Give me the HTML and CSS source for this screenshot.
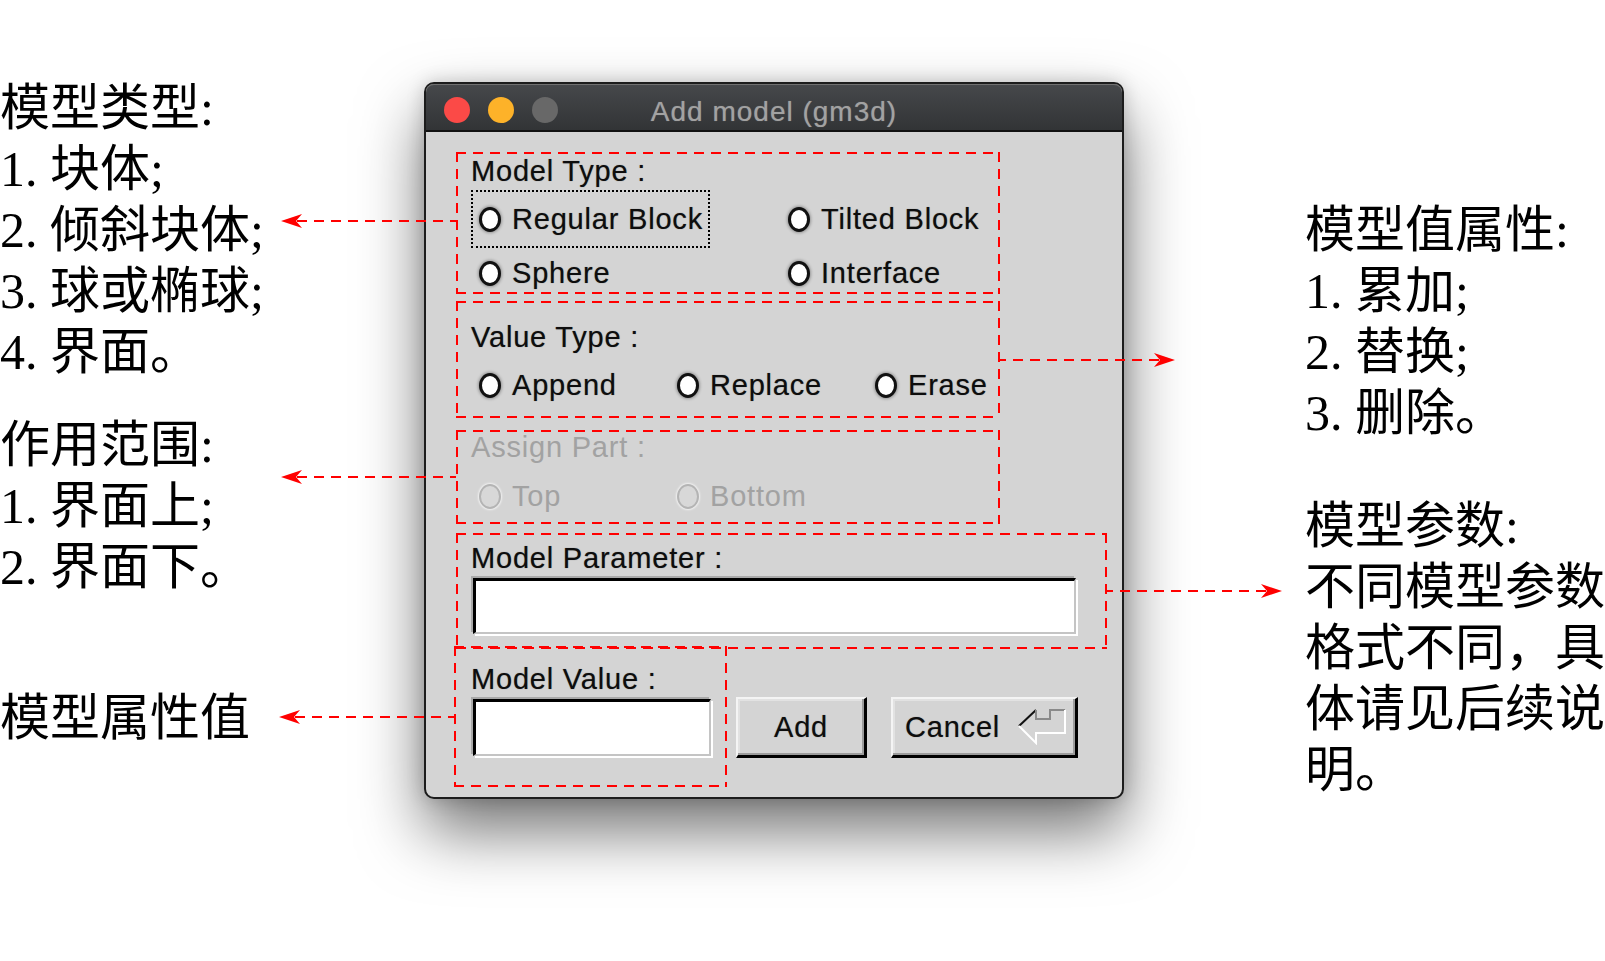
FILE: index.html
```html
<!DOCTYPE html>
<html lang="zh-CN">
<head>
    <meta charset="UTF-8">
    <meta name="viewport" content="width=device-width, initial-scale=1.0">
    <title>Add model (gm3d)</title>
    <link rel="stylesheet" href="styles.css">
</head>
<body>
<div id="page">
    <div class="notes notes-left">
        <div class="note note-type">
            <div>模型类型:</div>
            <div>1. 块体;</div>
            <div>2. 倾斜块体;</div>
            <div>3. 球或椭球;</div>
            <div>4. 界面。</div>
        </div>
        <div class="note note-part">
            <div>作用范围:</div>
            <div>1. 界面上;</div>
            <div>2. 界面下。</div>
        </div>
        <div class="note note-value">
            <div>模型属性值</div>
        </div>
    </div>

    <div id="dialog">
        <div id="titlebar">
            <div class="lights">
                <span class="light red"></span>
                <span class="light yellow"></span>
                <span class="light off"></span>
            </div>
            <div id="title">Add model (gm3d)</div>
            <div></div>
        </div>

        <div id="dialog-body">
            <div class="group box-type">
                <span class="arrow to-left"><svg width="175" height="16" viewBox="0 0 175 16"><line x1="16" y1="8" x2="175" y2="8" stroke="#f00" stroke-width="2" stroke-dasharray="10 7"/><path d="M0 8 L21 1 L15 8 L21 15 Z" fill="#f00"/></svg></span>
                <div class="label">Model Type :</div>
                <div class="options two">
                    <label class="opt focus"><span class="radio"></span>Regular Block</label>
                    <label class="opt"><span class="radio"></span>Tilted Block</label>
                    <label class="opt"><span class="radio"></span>Sphere</label>
                    <label class="opt"><span class="radio"></span>Interface</label>
                </div>
            </div>

            <div class="group box-value-type">
                <span class="arrow to-right"><svg width="175" height="16" viewBox="0 0 175 16"><line x1="16" y1="8" x2="175" y2="8" stroke="#f00" stroke-width="2" stroke-dasharray="10 7"/><path d="M0 8 L21 1 L15 8 L21 15 Z" fill="#f00"/></svg></span>
                <div class="label">Value Type :</div>
                <div class="options three">
                    <label class="opt"><span class="radio"></span>Append</label>
                    <label class="opt"><span class="radio"></span>Replace</label>
                    <label class="opt"><span class="radio"></span>Erase</label>
                </div>
            </div>

            <div class="group box-part disabled">
                <span class="arrow to-left"><svg width="175" height="16" viewBox="0 0 175 16"><line x1="16" y1="8" x2="175" y2="8" stroke="#f00" stroke-width="2" stroke-dasharray="10 7"/><path d="M0 8 L21 1 L15 8 L21 15 Z" fill="#f00"/></svg></span>
                <div class="label">Assign Part :</div>
                <div class="options three">
                    <label class="opt"><span class="radio"></span>Top</label>
                    <label class="opt"><span class="radio"></span>Bottom</label>
                </div>
            </div>

            <div class="group box-param">
                <span class="arrow to-right"><svg width="175" height="16" viewBox="0 0 175 16"><line x1="16" y1="8" x2="175" y2="8" stroke="#f00" stroke-width="2" stroke-dasharray="10 7"/><path d="M0 8 L21 1 L15 8 L21 15 Z" fill="#f00"/></svg></span>
                <div class="label">Model Parameter :</div>
                <div class="field field-param"></div>
            </div>

            <div class="bottom-row">
                <div class="group box-model-value">
                    <span class="arrow to-left"><svg width="175" height="16" viewBox="0 0 175 16"><line x1="16" y1="8" x2="175" y2="8" stroke="#f00" stroke-width="2" stroke-dasharray="10 7"/><path d="M0 8 L21 1 L15 8 L21 15 Z" fill="#f00"/></svg></span>
                    <div class="label">Model Value :</div>
                    <div class="field field-value"></div>
                </div>
                <button class="btn btn-add">Add</button>
                <button class="btn btn-cancel">
                    <span>Cancel</span>
                    <svg width="48" height="36" viewBox="0 0 48 36">
                        <polyline points="1,17 18,1" fill="none" stroke="#111" stroke-width="2"/>
                        <polyline points="18,1 18,10 32,10 32,1 47,1" fill="none" stroke="#8a8a8a" stroke-width="2"/>
                        <polyline points="47,1 47,24 18,24 18,34 1,17" fill="none" stroke="#fff" stroke-width="2"/>
                    </svg>
                </button>
            </div>
        </div>
    </div>

    <div class="notes notes-right">
        <div class="note note-attr">
            <div>模型值属性:</div>
            <div>1. 累加;</div>
            <div>2. 替换;</div>
            <div>3. 删除。</div>
        </div>
        <div class="note note-param">
            <div>模型参数:</div>
            <div>不同模型参数</div>
            <div>格式不同，具</div>
            <div>体请见后续说</div>
            <div>明。</div>
        </div>
    </div>
</div>
</body>
</html>
```

FILE: styles.css
```css
body { margin: 0; background: #fff; overflow: hidden; font-family: "Liberation Sans", Arial, sans-serif; }
#page { display: flex; align-items: flex-start; width: 1605px; height: 961px; }

/* annotations */
.notes { font-family: "Liberation Serif", "Noto Sans CJK SC", serif; font-size: 50px; line-height: 61px; color: #000; white-space: nowrap; }
.notes-left { width: 424px; flex: none; padding-top: 78px; }
.note-part { margin-top: 32px; }
.note-value { margin-top: 90px; }
.notes-right { padding-left: 181px; padding-top: 200px; }
.note-param { margin-top: 52px; }

/* window */
#dialog { width: 700px; height: 717px; flex: none; margin-top: 82px; box-sizing: border-box; border: 2px solid #1c1c1c; border-radius: 10px; background: #d4d4d4; box-shadow: 0 32px 64px rgba(0,0,0,0.55), 0 0 18px rgba(0,0,0,0.18); }
#titlebar { display: grid; grid-template-columns: 1fr auto 1fr; align-items: center; height: 46px; border-bottom: 2px solid #111; border-radius: 8px 8px 0 0; background: linear-gradient(#46484b, #323436); box-shadow: inset 0 1px 0 #707070; }
.lights { display: flex; gap: 18px; padding-left: 18px; }
.light { width: 26px; height: 26px; border-radius: 50%; }
.red { background: #fb4a47; }
.yellow { background: #fdb229; }
.off { background: #686868; }
#title { color: #a2a2a2; font-size: 28px; letter-spacing: 1px; line-height: 46px; padding-top: 5px; text-shadow: 0 0 1px rgba(160,160,160,0.6); }

#dialog-body { display: flex; flex-direction: column; align-items: flex-start; padding: 20px 0 0 30px; }

.group { position: relative; box-sizing: border-box; padding-left: 15px; color: #0d0d0d; text-shadow: 0 0 1px rgba(0,0,0,0.45);
    background:
        repeating-linear-gradient(90deg, #f00 0 10px, transparent 10px 17px) left top / 100% 2px no-repeat,
        repeating-linear-gradient(90deg, #f00 0 10px, transparent 10px 17px) left bottom / 100% 2px no-repeat,
        repeating-linear-gradient(180deg, #f00 0 10px, transparent 10px 17px) left top / 2px 100% no-repeat,
        repeating-linear-gradient(180deg, #f00 0 10px, transparent 10px 17px) right top / 2px 100% no-repeat; }
.label { font-size: 29px; letter-spacing: 0.8px; line-height: 32px; }

.box-type { width: 544px; height: 142px; padding-top: 3px; }
.box-value-type { width: 544px; height: 117px; margin-top: 7px; padding-top: 20px; }
.box-part { width: 544px; height: 94px; margin-top: 12px; padding-top: 1px; }
.box-param { width: 651px; height: 116px; margin-top: 9px; padding-top: 9px; }
.bottom-row { display: flex; align-items: flex-start; margin-top: -3px; margin-left: -2px; }
.box-model-value { width: 273px; height: 141px; padding: 17px 0 0 17px; }

.box-type .options { margin-top: 5px; }
.box-value-type .options { margin-top: 5px; }
.box-part .options { margin-top: 6px; }

/* radio buttons */
.options { display: grid; margin-left: 2px; }
.options.two { grid-template-columns: 309px 309px; grid-template-rows: 54px 56px; }
.options.three { grid-template-columns: 198px 198px 198px; }
.opt { display: flex; align-items: center; gap: 11px; height: 54px; padding: 0 5px 0 6px; justify-self: start; font-size: 29px; letter-spacing: 0.8px; line-height: 32px; }
.opt.focus { outline: 2px dotted #000; }
.radio { width: 22px; height: 25px; flex: none; box-sizing: border-box; border: 3px solid #111; border-radius: 50%; background: #fff; box-shadow: 0 0 3px 1px rgba(0,0,0,0.3); }
.disabled { color: #a2a2a2; text-shadow: none; }
.disabled .radio { border: 2px solid #b4b4b4; background: #d8d8d8; box-shadow: 0 0 2px 1px rgba(255,255,255,0.7); }

/* text fields */
.field { box-sizing: border-box; margin-left: 2px; background: #fff; border-top: 3px solid #000; border-left: 3px solid #000; border-right: 2px solid #c4c4c4; border-bottom: 2px solid #c4c4c4; box-shadow: -2px -2px 0 #a9a9a9, 2px 2px 0 #fff; }
.field-param { width: 603px; height: 56px; margin-top: 4px; }
.field-value { width: 238px; height: 57px; margin-top: 4px; }

/* buttons */
.btn { box-sizing: border-box; height: 61px; margin-top: 51px; padding: 0; background: #d4d4d4; color: #0d0d0d; text-shadow: 0 0 1px rgba(0,0,0,0.45); font-family: "Liberation Sans", Arial, sans-serif; font-size: 29px; letter-spacing: 0.8px; line-height: 32px; border-top: 2px solid #f4f4f4; border-left: 2px solid #f4f4f4; border-right: 3px solid #000; border-bottom: 3px solid #000; box-shadow: inset -2px -2px 0 #9c9c9c, inset 2px 2px 0 #e2e2e2; }
.btn-add { width: 131px; margin-left: 9px; }
.btn-cancel { width: 187px; margin-left: 24px; display: flex; align-items: center; justify-content: space-between; padding: 0 9px 0 12px; }

/* annotation arrows */
.arrow { position: absolute; width: 175px; height: 16px; line-height: 0; }
.arrow.to-left { right: 100%; }
.arrow.to-right { left: 100%; transform: scaleX(-1); }
.box-type .arrow { top: 61px; }
.box-part .arrow { top: 39px; }
.box-model-value .arrow { top: 63px; }
.box-value-type .arrow { top: 51px; }
.box-param .arrow { top: 50px; }
```
